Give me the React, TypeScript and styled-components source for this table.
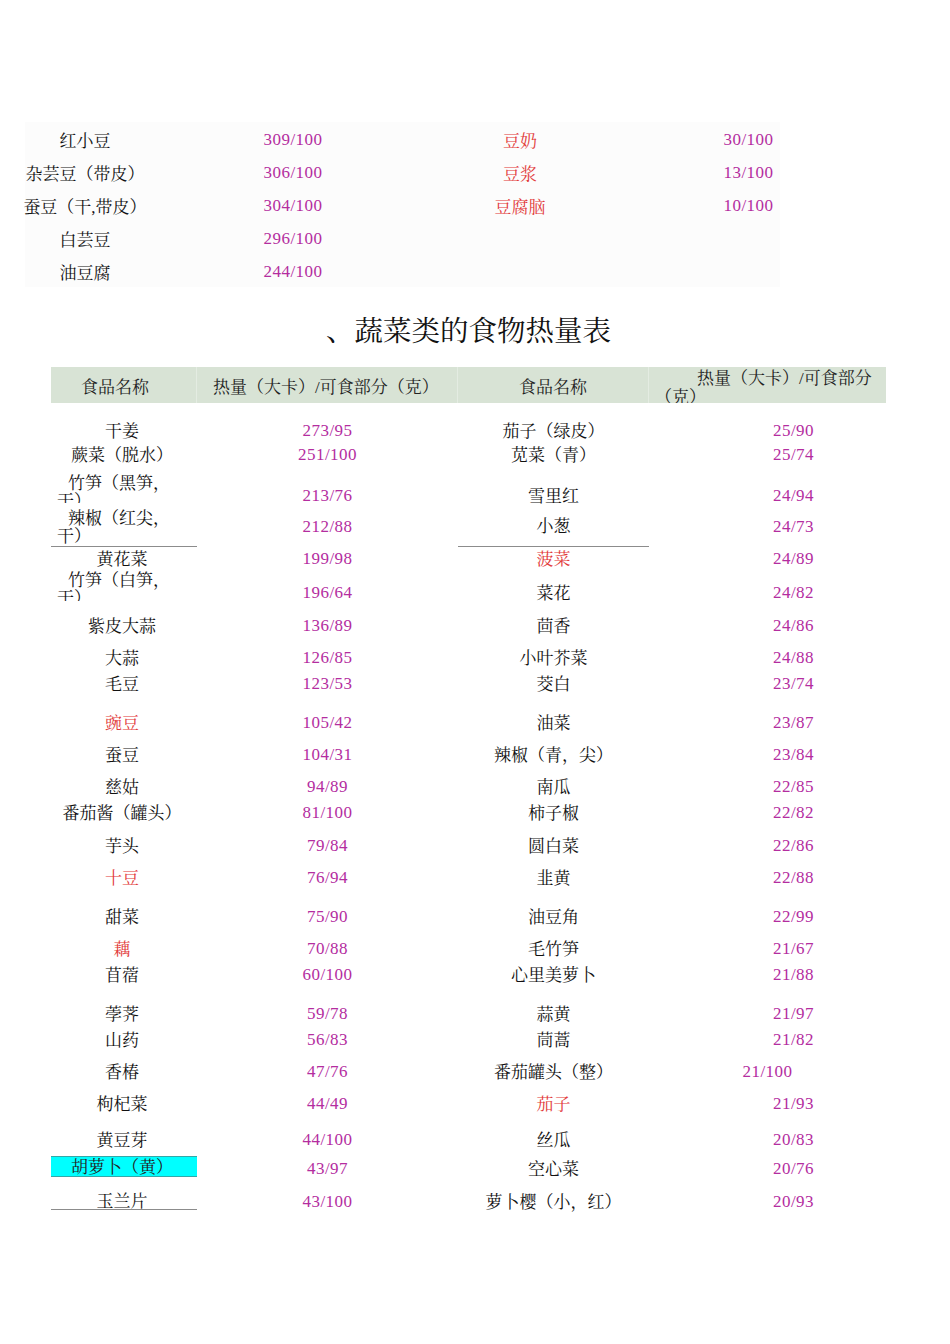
import React from "react";
import styled, { createGlobalStyle } from "styled-components";

const Global = createGlobalStyle`
  html, body { margin: 0; padding: 0; background: #ffffff; }
  body { font-family: "Liberation Serif", "Noto Serif CJK SC", "Noto Sans CJK SC", serif; color: #111; }
`;

const NUM = "#b42d9f";
const RED = "#e23a3a";

const Page = styled.div`
  width: 950px;
  min-height: 1344px;
  padding-top: 122px;
  box-sizing: border-box;
`;

const TopTable = styled.div`
  margin-left: 25px;
  width: 755px;
  background: #fcfcfc;
  display: grid;
  grid-template-columns: 120px 296px 158px 181px;
`;

const TopCell = styled.div<{ $color?: string; $pl?: number; $num?: boolean }>`
  height: 33px;
  box-sizing: border-box;
  padding-top: 2px;
  display: flex;
  align-items: center;
  justify-content: center;
  padding-left: ${(p) => p.$pl ?? 0}px;
  font-size: 17px;
  letter-spacing: ${(p) => (p.$num ? "0.5px" : "0")};
  white-space: nowrap;
  color: ${(p) => p.$color ?? "#111"};
`;

const Title = styled.h1`
  margin: 0;
  height: 80px;
  box-sizing: border-box;
  padding-top: 2px;
  padding-right: 13px;
  display: flex;
  align-items: center;
  justify-content: center;
  font-size: 28.5px;
  font-weight: normal;
  color: #111;
`;

const VegTable = styled.div`
  margin-left: 51px;
  width: 835px;
`;

const Cols = `
  display: grid;
  grid-template-columns: 146px 261px 191px 237px;
`;

const HeaderRow = styled.div`
  ${Cols}
  height: 36px;
  background: #d8e3d5;
`;

const HeadCell = styled.div<{ $align?: string; $pl?: number }>`
  display: flex;
  align-items: center;
  justify-content: ${(p) => p.$align ?? "flex-start"};
  box-sizing: border-box;
  padding-top: 1px;
  padding-left: ${(p) => p.$pl ?? 0}px;
  font-size: 17px;
  color: #222;
  white-space: nowrap;
  border-right: 1px solid #e4ece2;
  &:last-child { border-right: none; }
`;

const HeadWrapCell = styled.div`
  height: 36px;
  overflow: hidden;
  box-sizing: border-box;
  padding: 2px 4px 0 6px;
  font-size: 17px;
  line-height: 19px;
  color: #222;
  text-indent: 42px;
`;

const BodyRow = styled.div<{ $h: number }>`
  ${Cols}
  height: ${(p) => p.$h}px;
`;

const Cell = styled.div<{
  $color?: string;
  $pb?: number;
  $pl?: number;
  $pr?: number;
  $align?: string;
  $line?: boolean;
  $num?: boolean;
}>`
  display: flex;
  align-items: flex-end;
  justify-content: ${(p) => p.$align ?? "center"};
  box-sizing: border-box;
  padding-bottom: ${(p) => (p.$pb ?? 0) + (p.$num ? 1 : 0)}px;
  padding-left: ${(p) => p.$pl ?? 0}px;
  padding-right: ${(p) => p.$pr ?? 0}px;
  font-size: 17px;
  line-height: 14px;
  letter-spacing: ${(p) => (p.$num ? "0.5px" : "0")};
  white-space: nowrap;
  color: ${(p) => p.$color ?? "#111"};
  border-bottom: ${(p) => (p.$line ? "1px solid #8c8c8c" : "none")};
`;

const WrapName = styled.div<{ $h: number }>`
  width: 118px;
  height: ${(p) => p.$h}px;
  box-sizing: border-box;
  padding-top: 2px;
  overflow: hidden;
  white-space: normal;
  text-indent: 11px;
  line-height: 18px;
`;

const Highlight = styled.div`
  width: 100%;
  height: 21px;
  box-sizing: border-box;
  background: #00ffff;
  border-top: 1px solid #35a7a7;
  border-bottom: 1px solid #35a7a7;
  display: flex;
  align-items: center;
  justify-content: center;
  padding: 3px 4px 0 0;
  line-height: 18px;
  color: #222;
`;

type Row = {
  h: number;
  n1: string;
  v1: string;
  n2: string;
  v2: string;
  red1?: boolean;
  red2?: boolean;
  wrap?: number;
  wrapPb?: number;
  pb?: number;
  line?: boolean;
  cyan?: boolean;
  bottomLine?: boolean;
  v2Centered?: boolean;
};

const rows: Row[] = [
  { h: 36, n1: "干姜", v1: "273/95", n2: "茄子（绿皮）", v2: "25/90" },
  { h: 24, n1: "蕨菜（脱水）", v1: "251/100", n2: "苋菜（青）", v2: "25/74" },
  { h: 41, n1: "竹笋（黑笋，干）", v1: "213/76", n2: "雪里红", v2: "24/94", wrap: 30, wrapPb: 1 },
  { h: 43, n1: "辣椒（红尖，干）", v1: "212/88", n2: "小葱", v2: "24/73", wrap: 37, wrapPb: 1, pb: 12, line: true },
  { h: 20, n1: "黄花菜", v1: "199/98", n2: "菠菜", v2: "24/89", red2: true },
  { h: 34, n1: "竹笋（白笋，干）", v1: "196/64", n2: "菜花", v2: "24/82", wrap: 31, wrapPb: 0 },
  { h: 33, n1: "紫皮大蒜", v1: "136/89", n2: "茴香", v2: "24/86" },
  { h: 32, n1: "大蒜", v1: "126/85", n2: "小叶芥菜", v2: "24/88" },
  { h: 26, n1: "毛豆", v1: "123/53", n2: "茭白", v2: "23/74" },
  { h: 39, n1: "豌豆", v1: "105/42", n2: "油菜", v2: "23/87", red1: true },
  { h: 32, n1: "蚕豆", v1: "104/31", n2: "辣椒（青，尖）", v2: "23/84" },
  { h: 32, n1: "慈姑", v1: "94/89", n2: "南瓜", v2: "22/85" },
  { h: 26, n1: "番茄酱（罐头）", v1: "81/100", n2: "柿子椒", v2: "22/82" },
  { h: 33, n1: "芋头", v1: "79/84", n2: "圆白菜", v2: "22/86" },
  { h: 32, n1: "十豆", v1: "76/94", n2: "韭黄", v2: "22/88", red1: true },
  { h: 39, n1: "甜菜", v1: "75/90", n2: "油豆角", v2: "22/99" },
  { h: 32, n1: "藕", v1: "70/88", n2: "毛竹笋", v2: "21/67", red1: true },
  { h: 26, n1: "苜蓿", v1: "60/100", n2: "心里美萝卜", v2: "21/88" },
  { h: 39, n1: "荸荠", v1: "59/78", n2: "蒜黄", v2: "21/97" },
  { h: 26, n1: "山药", v1: "56/83", n2: "茼蒿", v2: "21/82" },
  { h: 32, n1: "香椿", v1: "47/76", n2: "番茄罐头（整）", v2: "21/100", v2Centered: true },
  { h: 32, n1: "枸杞菜", v1: "44/49", n2: "茄子", v2: "21/93", red2: true },
  { h: 36, n1: "黄豆芽", v1: "44/100", n2: "丝瓜", v2: "20/83" },
  { h: 30, n1: "胡萝卜（黄）", v1: "43/97", n2: "空心菜", v2: "20/76", cyan: true, pb: 1 },
  { h: 32, n1: "玉兰片", v1: "43/100", n2: "萝卜樱（小，红）", v2: "20/93", bottomLine: true },
];

const topRows = [
  ["红小豆", "309/100", "豆奶", "30/100"],
  ["杂芸豆（带皮）", "306/100", "豆浆", "13/100"],
  ["蚕豆（干,带皮）", "304/100", "豆腐脑", "10/100"],
  ["白芸豆", "296/100", "", ""],
  ["油豆腐", "244/100", "", ""],
];

export default function App() {
  return (
    <Page>
      <Global />
      <TopTable>
        {topRows.map((r, i) => (
          <React.Fragment key={i}>
            <TopCell>{r[0]}</TopCell>
            <TopCell $color={NUM} $num>{r[1]}</TopCell>
            <TopCell $color={RED}>{r[2]}</TopCell>
            <TopCell $color={NUM} $pl={118} $num>{r[3]}</TopCell>
          </React.Fragment>
        ))}
      </TopTable>

      <Title>、蔬菜类的食物热量表</Title>

      <VegTable>
        <HeaderRow>
          <HeadCell $pl={30}>食品名称</HeadCell>
          <HeadCell $pl={16}>热量（大卡）/可食部分（克）</HeadCell>
          <HeadCell $align="center">食品名称</HeadCell>
          <HeadWrapCell>热量（大卡）/可食部分（克）</HeadWrapCell>
        </HeaderRow>
        {rows.map((r, i) => (
          <BodyRow key={i} $h={r.h}>
            {r.wrap ? (
              <Cell $align="flex-start" $pl={6} $pb={r.wrapPb} $line={r.line}>
                <WrapName $h={r.wrap}>{r.n1}</WrapName>
              </Cell>
            ) : r.cyan ? (
              <Cell $pb={r.pb}>
                <Highlight>{r.n1}</Highlight>
              </Cell>
            ) : (
              <Cell $color={r.red1 ? RED : undefined} $pr={4} $pb={r.pb} $line={r.bottomLine}>
                {r.n1}
              </Cell>
            )}
            <Cell $color={NUM} $pb={r.pb} $num>
              {r.v1}
            </Cell>
            <Cell $color={r.red2 ? RED : undefined} $pb={r.pb} $line={r.line}>
              {r.n2}
            </Cell>
            <Cell $color={NUM} $pb={r.pb} $pl={r.v2Centered ? 0 : 52} $num>
              {r.v2}
            </Cell>
          </BodyRow>
        ))}
      </VegTable>
    </Page>
  );
}
